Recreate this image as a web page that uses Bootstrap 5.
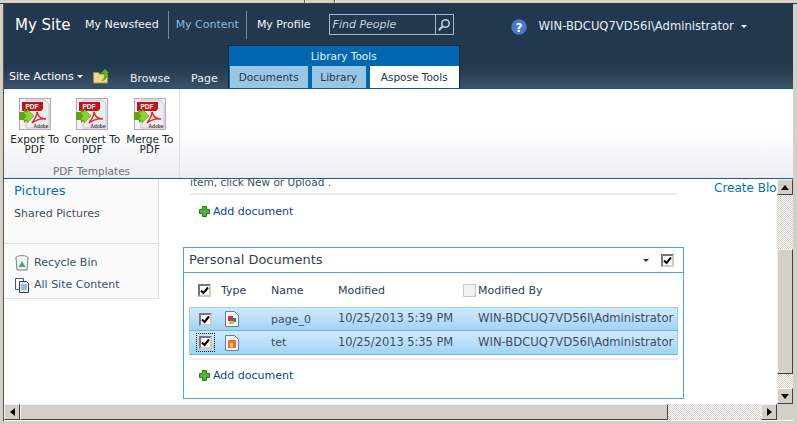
<!DOCTYPE html>
<html lang="en">
  <head>
    <meta charset="UTF-8" />
    <title>My Content - Personal Documents</title>
    <link href="https://cdn.jsdelivr.net/npm/bootstrap@5.3.0/dist/css/bootstrap.min.css" rel="stylesheet" />
    <style>
      html, body { height: 424px; overflow: hidden; }
      body { background: #d4d0c8; font-family: "DejaVu Sans", Verdana, sans-serif; font-size: 11px; color: #3b4f65; line-height: 1.2; }
      /* browser chrome */
      .top-strip { height: 4px; border-bottom: 1px solid #3a3a3a; background: #d4d0c8; padding-left: 304px; }
      .strip-sep { width: 2px; height: 3px; border-left: 1px solid #555; border-right: 1px solid #fff; margin-right: 28px; }
      .frame { height: 417px; margin-left: 3px; margin-right: 4px; border-left: 1px solid #555; background: #fff; }
      /* ribbon top */
      .site-bar { height: 85px; background: linear-gradient(#21384f 0, #21384f 62px, #3c526a 85px); border-bottom: 1px solid #0a5a96; color: #fff; }
      .bar-upper { height: 41px; padding-left: 11px; }
      .site-title { font-size: 15px; width: 63px; color: #fff; }
      .top-link { font-size: 11px; color: #f2f6fa; padding: 0 7px; height: 28px; line-height: 28px; white-space: nowrap; }
      .top-link.current { color: #8fb8dc; border-left: 1px solid #6d8aa6; border-right: 1px solid #6d8aa6; padding: 0 7px; margin: 0 3px 0 2px; }
      .find-box { width: 125px; height: 21px; margin-left: 11px; border: 1px solid #a9b8c8; }
      .find-box em { flex: 1; font-size: 11px; padding-left: 3px; color: #c6d2de; line-height: 19px; }
      .find-btn { width: 18px; height: 19px; border-left: 1px solid #a9b8c8; }
      .help-ic { margin-left: 57px; margin-top: 4px; width: 16px; height: 16px; }
      .user-name { margin-left: 12px; margin-top: 4px; font-size: 11.6px; color: #e6eef6; white-space: nowrap; }
      .caret-w { display: inline-block; width: 0; height: 0; border: 3px solid transparent; border-top: 3px solid #fff; border-bottom: 0; vertical-align: 2px; }
      .bar-lower { height: 43px; padding-left: 5px; }
      .site-actions { width: 84px; padding-bottom: 5px; color: #fff; white-space: nowrap; }
      .folder-ic { width: 16px; height: 15px; margin-bottom: 4px; margin-right: 21px; }
      .plain-tab { color: #e9eff5; padding-bottom: 3px; }
      .tab-page { margin-left: 21px; }
      .ctx-group { width: 232px; height: 43px; margin-left: 10px; background: #0067b1; border: 1px solid #0b2a45; border-bottom: 0; }
      .ctx-title { height: 20px; line-height: 20px; text-align: center; color: #e8f2fa; font-size: 10.5px; }
      .ctx-tab { height: 22px; line-height: 22px; text-align: center; background: #9ac6e6; color: #24384d; font-size: 10.5px; margin-left: 1px; margin-right: 3px; }
      .ctx-tab.active { background: #fff; color: #23364a; margin-right: 0; }
      .tab-docs { width: 78px; }
      .tab-lib { width: 54px; }
      .tab-aspose { width: 89px; }
      /* ribbon body */
      .ribbon-body { height: 90px; background: linear-gradient(#fff 0, #fff 45%, #eceef0 100%); border-bottom: 1px solid #1c5a85; color: #222; }
      .rb-group { width: 176px; border-right: 1px solid #dfe1e4; }
      .rb-buttons { height: 76px; padding-top: 9px; padding-left: 2px; }
      .rb-btn { width: 57.500px; text-align: center; font-size: 10.5px; line-height: 10px; color: #23282e; }
      .rb-btn svg { display: block; margin: 0 auto 4px; }
      .rb-label { text-align: center; color: #6c7278; font-size: 10.5px; }
      /* content */
      .work-row { height: 225px; overflow: hidden; position: relative; }
      .side-nav { width: 155px; height: 120px; background: #fbfbfb; border-right: 1px solid #e0e0e0; border-bottom: 1px solid #e0e0e0; flex: none; }
      .nav-head { padding: 4px 0 0 10px; font-size: 13px; color: #0072bc; height: 24px; }
      .nav-item { padding: 4px 0 0 10px; height: 40px; color: #3b4f65; }
      .nav-foot { border-top: 1px solid #e0e0e0; padding: 8px 0 0 11px; }
      .nav-foot > div { height: 22px; color: #3b4f65; gap: 5px; }
      .page-main { flex: none; width: 495px; margin-left: 24px; }
      .cut-text { margin-top: -3px; height: 13px; margin-left: 7px; white-space: nowrap; color: #3b4f65; font-size: 10.5px; }
      .thin-line { height: 2px; background: #ececec; margin-left: 6px; width: 489px; }
      .add-doc { color: #0a3fa8; gap: 3px; }
      .add-doc svg { flex: none; }
      .add-first { padding: 10px 0 0 16px; }
      .part-box { width: 501px; height: 152px; margin-top: 29px; border: 1px solid #46a5ee; }
      .part-title { height: 25px; border-bottom: 1px solid #46a5ee; padding: 0 9px 0 5px; font-size: 13px; color: #333f4e; }
      .caret-d { width: 0; height: 0; border: 3px solid transparent; border-top: 3px solid #1d3a58; border-bottom: 0; margin-right: 12px; }
      .chk { display: inline-block; width: 13px; height: 13px; flex: none; border: 2px solid #777; border-right-color: #cfcbc4; border-bottom-color: #cfcbc4; background: #fff; }
      .chk svg { display: block; }
      .chk.off { border: 1px solid #c8c8c8; background: #f2f2f2; }
      .chk.dotted { outline: 1px dotted #000; outline-offset: 2px; }
      .by-head { gap: 2px; }
      .doc-table { width: 489px; margin: 0 0 0 5px; table-layout: fixed; border-collapse: separate; border-spacing: 0; color: #3b4f65; }
      .doc-table th, .doc-table td { padding: 0; font-weight: 400; white-space: nowrap; overflow: hidden; vertical-align: middle; background: transparent; color: inherit; box-shadow: none; border: 0; }
      .doc-table th { height: 34px; color: #2f4058; }
      .doc-table .chk-col { padding-left: 9px; }
      .doc-table .icon-cell { padding-left: 4px; }
      .doc-row td { height: 24px; background: linear-gradient(#cfe9fc 0, #bfe0fa 45%, #9ed3f7 100%); border-bottom: 1px solid #74afd8; }
      .doc-row:first-child td { border-top: 1px solid #a5cce8; }
      .doc-row .first-cell { border-left: 1px solid #a5cce8; }
      .doc-table .date-cell { font-size: 11.4px; }
      .doc-table .last-cell { border-right: 1px solid #a5cce8; padding-left: 15px; font-size: 11.6px; }
      .add-second { padding: 9px 0 0 15px; }
      .line-under { height: 2px; background: #ececec; width: 489px; margin: 3px 0 0 5px; }
      .right-col { margin-left: 36px; color: #0072bc; white-space: nowrap; overflow: hidden; flex: none; width: 63px; padding-top: 2px; font-size: 12px; }
      .v-bar { width: 16px; flex: none; margin-left: auto; display: flex; flex-direction: column; background: conic-gradient(#fff 25%, #d4d0c8 0 50%, #fff 0 75%, #d4d0c8 0) 0 0 / 2px 2px; }
      .sb-btn { width: 16px; height: 16px; flex: none; background: #d4d0c8; border: 1px solid; border-color: #f5f4f1 #404040 #404040 #f5f4f1; display: flex; align-items: center; justify-content: center; }
      .sb-thumb { background: #d4d0c8; border: 1px solid; border-color: #f5f4f1 #404040 #404040 #f5f4f1; }
      .v-bar .sb-thumb { height: 125px; margin-top: 54px; flex: none; }
      .v-bar .spacer { flex: 1; }
      .h-bar { height: 16px; display: flex; background: conic-gradient(#fff 25%, #d4d0c8 0 50%, #fff 0 75%, #d4d0c8 0) 0 0 / 2px 2px; }
      .h-bar .sb-thumb { width: 648px; }
      .h-bar .spacer { flex: 1; }
      .corner { width: 16px; height: 16px; background: #d4d0c8; flex: none; }
    </style>
  </head>
  <body>
    <!-- icons used more than once -->
    <svg width="0" height="0" class="d-block">
      <defs>
        <symbol id="tick" viewBox="0 0 9 9"><path d="M1 4.500 3.500 7 8 1.500" fill="none" stroke="#000" stroke-width="2" /></symbol>
        <symbol id="plus" viewBox="0 0 11 11"><path d="M3.500.5h4v3h3v4h-3v3h-4v-3h-3v-4h3z" fill="#4fb52f" stroke="#2c7a1c" /></symbol>
        <symbol id="pdf" viewBox="0 0 32 32">
          <rect x=".5" y=".5" width="31" height="31" fill="#f4f1f7" stroke="#b9a5c9" />
          <path d="M7 2h19l4 4v24H7z" fill="#ececec" stroke="#c6c6c6" />
          <path d="M3 4h21v7l-2 2H3z" fill="#c4121a" />
          <text x="13" y="10.500" font-size="6.500" font-weight="700" fill="#fff" text-anchor="middle" font-family="Liberation Sans, sans-serif">PDF</text>
          <path d="M13 25C16 21 18 17 18 14 19 18 22 21 27 21 22 20.500 17 22 13 25z" fill="none" stroke="#e0232b" stroke-width="1.400" />
          <path d="M0 14h5v-3l7 7-7 7v-3H0z" fill="#5ea31c" />
          <path d="M4 14h4v-3l7 7-7 7v-3H4l3-4z" fill="#8fd12e" stroke="#4d8f14" stroke-width=".5" />
          <text x="22" y="29.500" font-size="4.800" font-weight="700" fill="#444" text-anchor="middle" font-family="Liberation Sans, sans-serif">Adobe</text>
        </symbol>
      </defs>
    </svg>

    <div class="top-strip d-flex">
      <span class="strip-sep"></span>
      <span class="strip-sep"></span>
    </div>
    <div class="frame d-flex flex-column">
      <div class="site-bar">
        <div class="bar-upper d-flex align-items-center">
          <span class="site-title">My Site</span>
          <span class="top-link">My Newsfeed</span>
          <span class="top-link current">My Content</span>
          <span class="top-link">My Profile</span>
          <div class="find-box d-flex">
            <em>Find People</em>
            <span class="find-btn d-flex align-items-center justify-content-center">
              <svg width="14" height="14" viewBox="0 0 14 14"><circle cx="8.500" cy="5.500" r="3.700" fill="none" stroke="#c2cedb" stroke-width="1.600" /><path d="M6 8 1.800 12.200" stroke="#c2cedb" stroke-width="2.200" /></svg>
            </span>
          </div>
          <svg class="help-ic" viewBox="0 0 16 16"><circle cx="8" cy="8" r="7.700" fill="#4a78c8" /><text x="8" y="12.500" font-size="12" font-weight="700" fill="#fff" text-anchor="middle" font-family="DejaVu Sans, sans-serif">?</text></svg>
          <span class="user-name">WIN-BDCUQ7VD56I\Administrator &nbsp;<i class="caret-w"></i></span>
        </div>
        <div class="bar-lower d-flex align-items-end">
          <span class="site-actions">Site Actions <i class="caret-w"></i></span>
          <svg class="folder-ic" viewBox="0 0 16 15">
            <path d="M.5 3.500h5l1 1.500h8v9H.5z" fill="#f0d98a" stroke="#a88a3c" />
            <path d="M12 0l4 4h-2v3c0 3-3 5-6 5 2-1 3-3 3-5V4H8z" fill="#57b32c" />
          </svg>
          <span class="plain-tab">Browse</span>
          <span class="plain-tab tab-page">Page</span>
          <div class="ctx-group">
            <div class="ctx-title">Library Tools</div>
            <div class="d-flex">
              <span class="ctx-tab tab-docs">Documents</span>
              <span class="ctx-tab tab-lib">Library</span>
              <span class="ctx-tab tab-aspose active">Aspose Tools</span>
            </div>
          </div>
        </div>
      </div>

      <div class="ribbon-body d-flex">
        <div class="rb-group">
          <div class="rb-buttons d-flex">
            <div class="rb-btn"><svg width="32" height="32"><use href="#pdf" /></svg>Export To PDF</div>
            <div class="rb-btn"><svg width="32" height="32"><use href="#pdf" /></svg>Convert To PDF</div>
            <div class="rb-btn"><svg width="32" height="32"><use href="#pdf" /></svg>Merge To PDF</div>
          </div>
          <div class="rb-label">PDF Templates</div>
        </div>
      </div>

      <div class="work-row d-flex">
        <div class="side-nav">
          <div class="nav-head">Pictures</div>
          <div class="nav-item">Shared Pictures</div>
          <div class="nav-foot">
            <div class="d-flex align-items-center">
              <svg width="14" height="16" viewBox="0 0 14 16"><ellipse cx="7" cy="2.500" rx="6" ry="1.800" fill="#fff" stroke="#6f7f86" /><path d="M1 3l1 12h10l1-12" fill="#eef2f2" stroke="#6f7f86" /><path d="M7 6l3.500 6h-7z" fill="#5fa05f" /></svg>
              Recycle Bin
            </div>
            <div class="d-flex align-items-center">
              <svg width="14" height="15" viewBox="0 0 14 15"><path d="M.5.5h8v11h-8z" fill="#fff" stroke="#3d5a80" /><path d="M4.500 3.500h7l2 2v9h-9z" fill="#eaf1fa" stroke="#1f3f6e" /><path d="M6 7h6M6 9h6M6 11h6" stroke="#5f7fa8" /></svg>
              All Site Content
            </div>
          </div>
        </div>

        <div class="page-main">
          <div class="cut-text">item, click New or Upload .</div>
          <div class="thin-line mt-1"></div>
          <div class="add-doc add-first d-flex align-items-center">
            <svg width="11" height="11"><use href="#plus" /></svg>Add document
          </div>

          <div class="part-box">
            <div class="part-title d-flex align-items-center">
              <span class="flex-grow-1">Personal Documents</span>
              <span class="caret-d"></span>
              <span class="chk"><svg width="9" height="9"><use href="#tick" /></svg></span>
            </div>
            <table class="doc-table">
              <colgroup>
                <col style="width: 32px" /><col style="width: 50px" /><col style="width: 67px" /><col style="width: 125px" /><col />
              </colgroup>
              <thead>
                <tr>
                  <th class="chk-col"><span class="chk d-block"><svg width="9" height="9"><use href="#tick" /></svg></span></th>
                  <th>Type</th>
                  <th>Name</th>
                  <th>Modified</th>
                  <th><span class="by-head d-flex align-items-center"><span class="chk off"></span>Modified By</span></th>
                </tr>
              </thead>
              <tbody>
                <tr class="doc-row">
                  <td class="chk-col first-cell"><span class="chk d-block"><svg width="9" height="9"><use href="#tick" /></svg></span></td>
                  <td class="icon-cell">
                    <svg class="d-block" width="14" height="16" viewBox="0 0 14 16"><path d="M.5.5h9l4 4v11H.5z" fill="#f4f7fc" stroke="#6a7ba8" /><rect x="3" y="5" width="5" height="5" fill="#e0322a" /><rect x="6" y="7" width="5" height="4" fill="#2c72c8" /><rect x="4" y="10" width="5" height="3" fill="#e8b820" /></svg>
                  </td>
                  <td>page_0</td>
                  <td class="date-cell">10/25/2013 5:39 PM</td>
                  <td class="last-cell">WIN-BDCUQ7VD56I\Administrator</td>
                </tr>
                <tr class="doc-row">
                  <td class="chk-col first-cell"><span class="chk dotted d-block"><svg width="9" height="9"><use href="#tick" /></svg></span></td>
                  <td class="icon-cell">
                    <svg class="d-block" width="14" height="16" viewBox="0 0 14 16"><path d="M.5.5h9l4 4v11H.5z" fill="#f4f7fc" stroke="#6a7ba8" /><rect x="3" y="5" width="8" height="8" fill="#e8742a" /><rect x="5" y="8" width="3" height="4" fill="#f4d080" /></svg>
                  </td>
                  <td>tet</td>
                  <td class="date-cell">10/25/2013 5:35 PM</td>
                  <td class="last-cell">WIN-BDCUQ7VD56I\Administrator</td>
                </tr>
              </tbody>
            </table>
            <div class="line-under"></div>
            <div class="add-doc add-second d-flex align-items-center">
              <svg width="11" height="11"><use href="#plus" /></svg>Add document
            </div>
          </div>
        </div>

        <div class="right-col">Create Blog</div>

        <div class="v-bar">
          <div class="sb-btn"><svg width="8" height="5"><path d="M4 0 8 5H0z" /></svg></div>
          <div class="sb-thumb"></div>
          <div class="spacer"></div>
          <div class="sb-btn"><svg width="8" height="5"><path d="M0 0h8L4 5z" /></svg></div>
        </div>
      </div>

      <div class="h-bar">
        <div class="sb-btn"><svg width="5" height="8"><path d="M5 0v8L0 4z" /></svg></div>
        <div class="sb-thumb"></div>
        <div class="spacer"></div>
        <div class="sb-btn"><svg width="5" height="8"><path d="M0 0v8l5-4z" /></svg></div>
        <div class="corner"></div>
      </div>
    </div>

    <script src="https://cdn.jsdelivr.net/npm/bootstrap@5.3.0/dist/js/bootstrap.bundle.min.js"></script>
  </body>
</html>
